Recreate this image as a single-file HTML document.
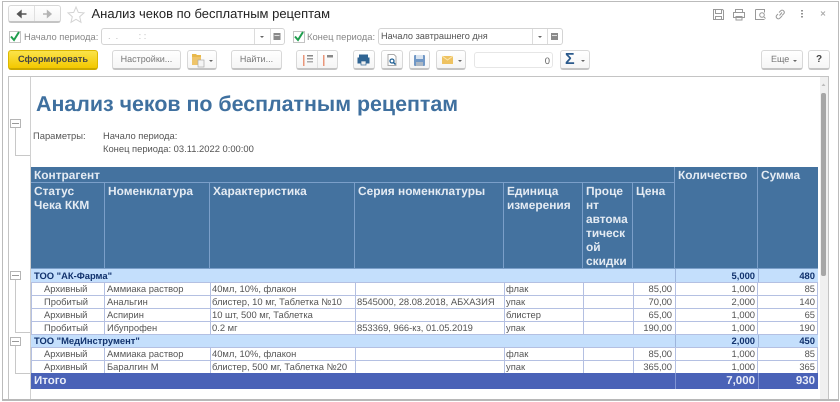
<!DOCTYPE html>
<html><head><meta charset="utf-8">
<style>
html,body{margin:0;padding:0;background:#fff}
body{width:840px;height:402px;overflow:hidden;position:relative;font-family:"Liberation Sans","DejaVu Sans",sans-serif;font-size:9.4px;color:#444;text-rendering:geometricPrecision}
.a{position:absolute;white-space:nowrap}
.btn{position:absolute;box-sizing:border-box;border:1px solid #d8d8d8;border-bottom:2px solid #c4c4c4;border-radius:3px;background:linear-gradient(#fff,#f5f5f5);text-align:center;color:#777;font-size:9px;height:20px;line-height:17px}
.fld{position:absolute;box-sizing:border-box;border:1px solid #d4d4d4;border-radius:3px;background:#fff;height:17px;line-height:15px;font-size:9.2px}
.l{position:absolute;background:#bbb}
.c{position:absolute;box-sizing:border-box;overflow:hidden;white-space:nowrap;height:13px;line-height:14px;font-size:9.4px;color:#555;padding:0 3px}
.r{text-align:right}
.h{position:absolute;box-sizing:border-box;background:#44729f;color:#e4ebf3;font-weight:bold;font-size:11.9px;line-height:14px;padding:1px 3px 0;border-right:1px solid #7b9fc9;border-bottom:1px solid #7b9fc9;overflow:hidden}
.g{position:absolute;background:#c4dffc;height:13px;line-height:14px;color:#12336e;font-weight:bold;font-size:9.4px;box-sizing:border-box;padding:0 3px}
.t{position:absolute;background:#4a62b7;color:#e8ecf8;font-weight:bold;box-sizing:border-box;height:16px;line-height:17px;padding:0 3px;font-size:11.5px}
.m{position:absolute;box-sizing:border-box;width:11px;height:9px;border:1px solid #b5b5b5;background:#fff}
.m:after{content:"";position:absolute;left:1px;right:1px;top:3px;height:1px;background:#999}
svg{position:absolute;overflow:visible}
</style></head><body>

<!-- outer frame -->
<div class="a" style="left:2px;top:1px;width:835px;height:399px;border:1px solid #bbb;border-bottom:0"></div>

<!-- nav buttons -->
<div class="btn" style="left:8px;top:5px;width:53px;height:18px"></div>
<div class="l" style="left:34px;top:6px;width:1px;height:15px;background:#e0e0e0"></div>
<svg style="left:0;top:0" width="100" height="30">
<path d="M17.500 14h9M21 11l-3.500 3 3.500 3z" fill="#555" stroke="#555" stroke-width="1.400"/>
<path d="M43 14h8M47.500 11l3.500 3-3.500 3z" fill="#b4b4b4" stroke="#b4b4b4" stroke-width="1.400"/>
<path d="M76 7l2.300 5.400 5.700.5-4.300 3.800 1.300 5.600-5-3-5 3 1.300-5.600-4.300-3.800 5.700-.5z" fill="#fff" stroke="#d4d4d4" stroke-width="1"/>
</svg>
<div class="a" style="left:91.500px;top:6px;font-size:13px;line-height:16px;color:#222">Анализ чеков по бесплатным рецептам</div>

<!-- top right icons -->
<svg style="left:0;top:0" width="840" height="30" fill="none" stroke="#999" stroke-width="1">
<path d="M713.500 9.500h9l1 1v9h-10zM715.500 9.500v4h6v-4M715.500 19.500v-3h6v3"/>
<path d="M735.500 12.500v-3h7v3M733.500 12.500h11v5h-11zM736 16.500h6v3.500h-6z"/>
<path d="M755.500 9.500h9v3M755.500 9.500v10h9"/><circle cx="762" cy="15" r="2.300"/><path d="M764 17l1.500 1.500"/>
<path d="M779 12.500l2-2a2.200 2.200 0 013 3l-2 2M782 16l-2.500 2.500a2.200 2.200 0 01-3-3l1.500-1.500M779.500 15.500l2.500-3"/>
<path d="M802 10v1.500M802 13v1.500M802 16v1.500" stroke="#777" stroke-width="1.600"/>
<path d="M821 11.500l4 4M825 11.500l-4 4" stroke="#aaa"/>
</svg>

<!-- period row -->
<div class="a" style="left:9px;top:31px;width:10px;height:10px;border:1px solid #c4c4c4;background:#fff"></div>
<div class="a" style="left:293px;top:31px;width:10px;height:10px;border:1px solid #c4c4c4;background:#fff"></div>
<svg style="left:0;top:0" width="320" height="50"><path d="M11 36.500l3 3.500 5-8" fill="none" stroke="#1f9d4d" stroke-width="2"/><path d="M295 36.500l3 3.500 5-8" fill="none" stroke="#1f9d4d" stroke-width="2"/></svg>
<div class="a" style="left:24px;top:30px;line-height:14px;color:#888">Начало периода:</div>
<div class="fld" style="left:101px;top:28px;width:184px;color:#bbb;padding-left:6px;height:17px">.&nbsp;&nbsp;.&nbsp;&nbsp;&nbsp;&nbsp;&nbsp;&nbsp;&nbsp;&nbsp;:&nbsp;:</div>
<div class="l" style="left:254px;top:29px;width:1px;height:15px;background:#dcdcdc"></div>
<div class="l" style="left:270px;top:29px;width:1px;height:15px;background:#dcdcdc"></div>
<div class="a" style="left:307px;top:30px;line-height:14px;color:#888">Конец периода:</div>
<div class="fld" style="left:378px;top:28px;width:185px;color:#555;padding-left:2px;height:17px">Начало завтрашнего дня</div>
<div class="l" style="left:532px;top:29px;width:1px;height:15px;background:#dcdcdc"></div>
<div class="l" style="left:547px;top:29px;width:1px;height:15px;background:#dcdcdc"></div>
<svg style="left:0;top:0" width="570" height="50">
<path d="M260 36h4l-2 2z" fill="#666"/><path d="M538 36h4l-2 2z" fill="#666"/>
<rect x="273.500" y="33" width="7" height="7" fill="#8a8a8a"/><rect x="274.500" y="35" width="5" height="1" fill="#ddd"/>
<rect x="551" y="33" width="7" height="7" fill="#8a8a8a"/><rect x="552" y="35" width="5" height="1" fill="#ddd"/>
</svg>

<!-- toolbar -->
<div class="btn" style="left:8px;top:50px;width:90px;height:20px;background:linear-gradient(#fbe34a,#f3c800);border:1px solid #dcb800;border-bottom:2px solid #cba800;color:#444;font-weight:bold;font-size:9.200px;line-height:17px">Сформировать</div>
<div class="btn" style="left:112px;top:50px;width:69px;height:20px">Настройки...</div>
<div class="btn" style="left:187px;top:50px;width:30px;height:20px"></div>
<div class="btn" style="left:231px;top:50px;width:51px;height:20px">Найти...</div>
<div class="btn" style="left:296px;top:50px;width:42px;height:20px"></div>
<div class="l" style="left:317px;top:51px;width:1px;height:17px;background:#e0e0e0"></div>
<div class="btn" style="left:353px;top:50px;width:22px;height:20px"></div>
<div class="btn" style="left:381px;top:50px;width:22px;height:20px"></div>
<div class="btn" style="left:409px;top:50px;width:21px;height:20px"></div>
<div class="btn" style="left:436px;top:50px;width:30px;height:20px"></div>
<div class="fld" style="left:474px;top:52px;width:79px;height:16px;text-align:right;padding-right:2px;color:#666;line-height:15px;font-size:9.400px;border-color:#e6e6e6">0</div>
<div class="btn" style="left:560px;top:50px;width:30px;height:20px"></div>
<div class="a" style="left:565px;top:51px;font-size:16px;line-height:18px;color:#2b5a8c;font-weight:bold">Σ</div>
<div class="btn" style="left:761px;top:50px;width:42px;height:20px;text-align:left;padding-left:9px">Еще</div>
<div class="btn" style="left:808px;top:50px;width:22px;height:20px;color:#444;font-weight:bold;font-size:10px">?</div>
<svg style="left:0;top:0" width="840" height="75">
<path d="M192 54h4l1 1h4v4h-9z" fill="#e8b84a"/><rect x="192" y="57" width="9" height="8" fill="#eec46a"/><rect x="198" y="60" width="6" height="7" fill="#f4f4f4" stroke="#aaa" stroke-width=".7"/>
<path d="M209 60h4l-2 2z" fill="#666"/>
<rect x="303" y="55" width="1.500" height="11" fill="#e9967a"/><rect x="307" y="55" width="6" height="1.500" fill="#888"/><rect x="307" y="58" width="6" height="1.500" fill="#999"/><rect x="307" y="61" width="6" height="1.500" fill="#aaa"/>
<rect x="323" y="55" width="1.500" height="11" fill="#e9967a"/><rect x="327" y="55" width="6" height="2.500" fill="#888"/>
<path d="M359.500 58v-3h8v3M358 58h11v5h-11z" fill="#2f6493" stroke="#2f6493"/><rect x="361" y="61" width="5" height="4" fill="#eee" stroke="#2f6493" stroke-width=".7"/>
<path d="M388 54.500h6l2 2v9h-8z" fill="#fff" stroke="#aaa"/><circle cx="392" cy="61" r="2" fill="none" stroke="#1f5f93" stroke-width="1.300"/><path d="M393.500 62.500l2 2" stroke="#1f5f93" stroke-width="1.500"/>
<rect x="414" y="55" width="11" height="11" rx="1" fill="#7198c6"/><rect x="416" y="55" width="7" height="4" fill="#d8e3ef"/><rect x="416" y="62" width="7" height="4" fill="#adb8c4"/>
<rect x="442" y="56" width="11" height="8" fill="#eec261"/><path d="M442 56l5.500 4 5.500-4" fill="none" stroke="#fae6b0"/>
<path d="M458 60h4l-2 2z" fill="#666"/><path d="M581 60h4l-2 2z" fill="#666"/><path d="M793 60h4l-2 2z" fill="#666"/>
</svg>

<!-- report frame -->
<div class="a" style="left:8px;top:76px;width:821px;height:324px;border:1px solid #c4c4c4;box-sizing:border-box"></div>
<div class="l" style="left:30px;top:77px;width:1px;height:322px;background:#d0d0d0"></div>
<div class="l" style="left:820px;top:77px;width:8px;height:322px;background:#f0f0f0"></div>
<div class="l" style="left:821px;top:93px;width:5px;height:183px;background:#a6a6a6;border-radius:2px"></div>
<svg style="left:0;top:0" width="840" height="100"><path d="M821.500 86h4l-2-2.500z" fill="#bbb"/></svg>
<div class="l" style="left:2px;top:399px;width:836px;height:2px;background:#b8b8b8"></div>

<div class="a" style="left:36px;top:91px;font-size:21.400px;line-height:26px;font-weight:bold;color:#3f709f">Анализ чеков по бесплатным рецептам</div>
<div class="a" style="left:33px;top:129px;line-height:13px;color:#555">Параметры:</div>
<div class="a" style="left:103px;top:129px;line-height:13px;color:#555">Начало периода:</div>
<div class="a" style="left:103px;top:142px;line-height:13px;color:#555">Конец периода: 03.11.2022 0:00:00</div>

<!-- outline tree -->
<div class="m" style="left:10px;top:119px"></div>
<div class="l" style="left:15px;top:128px;width:1px;height:27px;background:#c8c8c8"></div>
<div class="l" style="left:15px;top:155px;width:15px;height:1px;background:#c8c8c8"></div>
<div class="m" style="left:10px;top:271px"></div>
<div class="l" style="left:15px;top:280px;width:1px;height:52px;background:#c8c8c8"></div>
<div class="l" style="left:15px;top:332px;width:15px;height:1px;background:#c8c8c8"></div>
<div class="m" style="left:10px;top:337px"></div>
<div class="l" style="left:15px;top:346px;width:1px;height:27px;background:#c8c8c8"></div>
<div class="l" style="left:15px;top:373px;width:15px;height:1px;background:#c8c8c8"></div>

<!-- table header -->
<div class="h" style="left:31px;top:167px;width:644px;height:16px;padding-top:1px">Контрагент</div>
<div class="h" style="left:675px;top:167px;width:83px;height:102px;padding-top:1px">Количество</div>
<div class="h" style="left:758px;top:167px;width:60px;height:102px;padding-top:1px;border-right:0">Сумма</div>
<div class="h" style="left:31px;top:183px;width:74px;height:86px">Статус<br>Чека ККМ</div>
<div class="h" style="left:105px;top:183px;width:105px;height:86px">Номенклатура</div>
<div class="h" style="left:210px;top:183px;width:145px;height:86px">Характеристика</div>
<div class="h" style="left:355px;top:183px;width:149px;height:86px">Серия номенклатуры</div>
<div class="h" style="left:504px;top:183px;width:79px;height:86px">Единица<br>измерения</div>
<div class="h" style="left:583px;top:183px;width:50px;height:86px">Проце<br>нт<br>автома<br>тическ<br>ой<br>скидки</div>
<div class="h" style="left:633px;top:183px;width:42px;height:86px">Цена</div>

<!-- group 1 -->
<div class="g" style="left:31px;top:269px;width:644px">ТОО "АК-Фарма"</div>
<div class="g r" style="left:675px;top:269px;width:83px;border-left:1px solid #9db5dc">5,000</div>
<div class="g r" style="left:758px;top:269px;width:60px;border-left:1px solid #9db5dc">480</div>

<!-- rows -->
<div class="c" style="left:41px;top:282px">Архивный</div><div class="c" style="left:104px;top:282px">Аммиака раствор</div><div class="c" style="left:209px;top:282px">40мл, 10%, флакон</div><div class="c" style="left:503px;top:282px">флак</div><div class="c r" style="left:633px;top:282px;width:42px">85,00</div><div class="c r" style="left:675px;top:282px;width:83px">1,000</div><div class="c r" style="left:758px;top:282px;width:60px">85</div>

<div class="c" style="left:41px;top:295px">Пробитый</div><div class="c" style="left:104px;top:295px">Анальгин</div><div class="c" style="left:209px;top:295px">блистер, 10 мг, Таблетка №10</div><div class="c" style="left:354px;top:295px">8545000, 28.08.2018, АБХАЗИЯ</div><div class="c" style="left:503px;top:295px">упак</div><div class="c r" style="left:633px;top:295px;width:42px">70,00</div><div class="c r" style="left:675px;top:295px;width:83px">2,000</div><div class="c r" style="left:758px;top:295px;width:60px">140</div>

<div class="c" style="left:41px;top:308px">Архивный</div><div class="c" style="left:104px;top:308px">Аспирин</div><div class="c" style="left:209px;top:308px">10 шт, 500 мг, Таблетка</div><div class="c" style="left:503px;top:308px">блистер</div><div class="c r" style="left:633px;top:308px;width:42px">65,00</div><div class="c r" style="left:675px;top:308px;width:83px">1,000</div><div class="c r" style="left:758px;top:308px;width:60px">65</div>

<div class="c" style="left:41px;top:321px">Пробитый</div><div class="c" style="left:104px;top:321px">Ибупрофен</div><div class="c" style="left:209px;top:321px">0.2 мг</div><div class="c" style="left:354px;top:321px">853369, 966-кз, 01.05.2019</div><div class="c" style="left:503px;top:321px">упак</div><div class="c r" style="left:633px;top:321px;width:42px">190,00</div><div class="c r" style="left:675px;top:321px;width:83px">1,000</div><div class="c r" style="left:758px;top:321px;width:60px">190</div>

<!-- group 2 -->
<div class="g" style="left:31px;top:334px;width:644px">ТОО "МедИнструмент"</div>
<div class="g r" style="left:675px;top:334px;width:83px;border-left:1px solid #9db5dc">2,000</div>
<div class="g r" style="left:758px;top:334px;width:60px;border-left:1px solid #9db5dc">450</div>

<div class="c" style="left:41px;top:347px">Архивный</div><div class="c" style="left:104px;top:347px">Аммиака раствор</div><div class="c" style="left:209px;top:347px">40мл, 10%, флакон</div><div class="c" style="left:503px;top:347px">флак</div><div class="c r" style="left:633px;top:347px;width:42px">85,00</div><div class="c r" style="left:675px;top:347px;width:83px">1,000</div><div class="c r" style="left:758px;top:347px;width:60px">85</div>

<div class="c" style="left:41px;top:360px">Архивный</div><div class="c" style="left:104px;top:360px">Баралгин М</div><div class="c" style="left:209px;top:360px">блистер, 500 мг, Таблетка №20</div><div class="c" style="left:503px;top:360px">упак</div><div class="c r" style="left:633px;top:360px;width:42px">365,00</div><div class="c r" style="left:675px;top:360px;width:83px">1,000</div><div class="c r" style="left:758px;top:360px;width:60px">365</div>

<!-- grid lines -->
<svg style="left:0;top:0" width="840" height="402" stroke="#b4c0e2" stroke-width="1">
<path d="M31 282.500H818M31 295.500H818M31 308.500H818M31 321.500H818M31 334.500H818M31 347.500H818M31 360.500H818"/>
<path d="M31.500 282v52M104.500 282v52M210.500 282v52M355.500 282v52M504.500 282v52M583.500 282v52M633.500 282v52M675.500 282v52M757.500 282v52M817.500 282v52"/>
<path d="M31.500 347v26M104.500 347v26M210.500 347v26M355.500 347v26M504.500 347v26M583.500 347v26M633.500 347v26M675.500 347v26M757.500 347v26M817.500 347v26"/>
</svg>

<!-- total -->
<div class="t" style="left:31px;top:373px;width:644px">Итого</div>
<div class="t r" style="left:675px;top:373px;width:83px;border-left:1px solid #8094d4">7,000</div>
<div class="t r" style="left:758px;top:373px;width:60px;border-left:1px solid #8094d4">930</div>

</body></html>
